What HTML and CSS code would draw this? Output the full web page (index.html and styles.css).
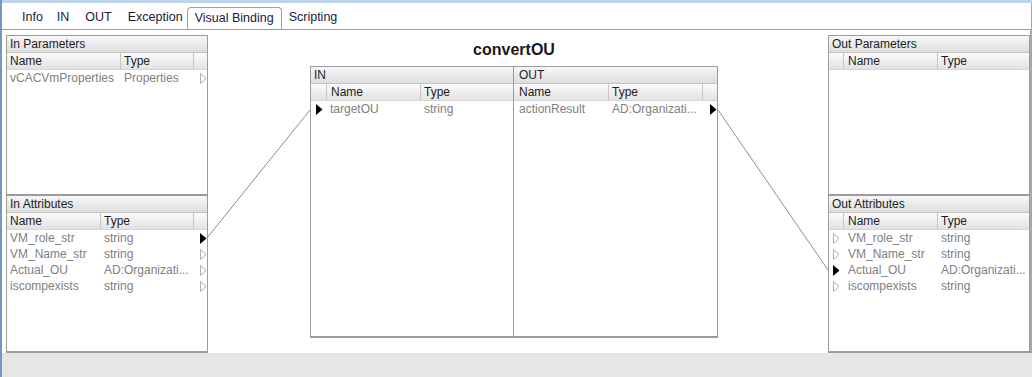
FILE: index.html
```html
<!DOCTYPE html>
<html>
<head>
<meta charset="utf-8">
<link rel="stylesheet" href="styles.css">
</head>
<body>
<div class="window">
  <div class="topbar"></div>
  <div class="tabs">
    <span class="tab">Info</span>
    <span class="tab">IN</span>
    <span class="tab">OUT</span>
    <span class="tab">Exception</span>
    <span class="tab active">Visual Binding</span>
    <span class="tab">Scripting</span>
  </div>
  <div class="content">
    <div class="col side">
      <div class="panel p-top">
        <div class="ptitle">In Parameters</div>
        <div class="grid g-inparam head"><span>Name</span><span>Type</span><span></span></div>
        <div class="grid g-inparam row"><span>vCACVmProperties</span><span>Properties</span><span class="arr"><svg width="7" height="11" viewBox="0 0 7 11"><path d="M0.5 0.5 L6 5.5 L0.5 10.5 Z" fill="none" stroke="#b0b0b0"/></svg></span></div>
      </div>
      <div class="panel p-bot">
        <div class="ptitle">In Attributes</div>
        <div class="grid g-inattr head"><span>Name</span><span>Type</span><span></span></div>
        <div class="grid g-inattr row"><span>VM_role_str</span><span>string</span><span class="arr"><svg width="7" height="11" viewBox="0 0 7 11"><path d="M0 0 L6.5 5.5 L0 11 Z" fill="#000"/></svg></span></div>
        <div class="grid g-inattr row"><span>VM_Name_str</span><span>string</span><span class="arr"><svg width="7" height="11" viewBox="0 0 7 11"><path d="M0.5 0.5 L6 5.5 L0.5 10.5 Z" fill="none" stroke="#b0b0b0"/></svg></span></div>
        <div class="grid g-inattr row"><span>Actual_OU</span><span>AD:Organizati...</span><span class="arr"><svg width="7" height="11" viewBox="0 0 7 11"><path d="M0.5 0.5 L6 5.5 L0.5 10.5 Z" fill="none" stroke="#b0b0b0"/></svg></span></div>
        <div class="grid g-inattr row"><span>iscompexists</span><span>string</span><span class="arr"><svg width="7" height="11" viewBox="0 0 7 11"><path d="M0.5 0.5 L6 5.5 L0.5 10.5 Z" fill="none" stroke="#b0b0b0"/></svg></span></div>
      </div>
    </div>

    <div class="col center">
      <div class="ctitle">convertOU</div>
      <div class="box">
        <div class="sect s-in">
          <div class="ptitle">IN</div>
          <div class="grid g-cin head"><span></span><span>Name</span><span>Type</span></div>
          <div class="grid g-cin row"><span class="arr"><svg width="7" height="11" viewBox="0 0 7 11"><path d="M0 0 L6.5 5.5 L0 11 Z" fill="#000"/></svg></span><span>targetOU</span><span>string</span></div>
        </div>
        <div class="sect s-out">
          <div class="ptitle">OUT</div>
          <div class="grid g-cout head"><span>Name</span><span>Type</span><span></span></div>
          <div class="grid g-cout row"><span>actionResult</span><span>AD:Organizati...</span><span class="arr"><svg width="7" height="11" viewBox="0 0 7 11"><path d="M0 0 L6.5 5.5 L0 11 Z" fill="#000"/></svg></span></div>
        </div>
      </div>
    </div>

    <div class="col side">
      <div class="panel p-top">
        <div class="ptitle">Out Parameters</div>
        <div class="grid g-out head"><span></span><span>Name</span><span>Type</span></div>
      </div>
      <div class="panel p-bot">
        <div class="ptitle">Out Attributes</div>
        <div class="grid g-out head"><span></span><span>Name</span><span>Type</span></div>
        <div class="grid g-out row"><span class="arr"><svg width="7" height="11" viewBox="0 0 7 11"><path d="M0.5 0.5 L6 5.5 L0.5 10.5 Z" fill="none" stroke="#b0b0b0"/></svg></span><span>VM_role_str</span><span>string</span></div>
        <div class="grid g-out row"><span class="arr"><svg width="7" height="11" viewBox="0 0 7 11"><path d="M0.5 0.5 L6 5.5 L0.5 10.5 Z" fill="none" stroke="#b0b0b0"/></svg></span><span>VM_Name_str</span><span>string</span></div>
        <div class="grid g-out row"><span class="arr"><svg width="7" height="11" viewBox="0 0 7 11"><path d="M0 0 L6.5 5.5 L0 11 Z" fill="#000"/></svg></span><span>Actual_OU</span><span>AD:Organizati...</span></div>
        <div class="grid g-out row"><span class="arr"><svg width="7" height="11" viewBox="0 0 7 11"><path d="M0.5 0.5 L6 5.5 L0.5 10.5 Z" fill="none" stroke="#b0b0b0"/></svg></span><span>iscompexists</span><span>string</span></div>
      </div>
    </div>

    <svg class="wires" width="1030" height="323" viewBox="0 0 1030 323">
      <line x1="205" y1="208" x2="308" y2="80" stroke="#8c8c8c" stroke-width="1"/>
      <line x1="716" y1="80" x2="826" y2="240" stroke="#8c8c8c" stroke-width="1"/>
    </svg>
  </div>
  <div class="footer"></div>
</div>
</body>
</html>
```

FILE: styles.css
```css
* { box-sizing: border-box; }
html, body { margin: 0; padding: 0; }
body {
  font-family: "Liberation Sans", Arial, sans-serif;
  font-size: 12px;
  background: #ffffff;
}
.window {
  width: 1032px;
  height: 377px;
  display: flex;
  flex-direction: column;
  border-left: 2px solid #7298c4;
  background: #ffffff;
}
.topbar {
  height: 3px;
  background: #bcd3ec;
  flex: none;
}
.tabs {
  height: 26px;
  flex: none;
  display: flex;
  align-items: flex-end;
  padding-left: 13px;
  border-right: 1px solid #a8a8a8;
}
.tab {
  padding: 0 7px;
  height: 22px;
  line-height: 20px;
  color: #1a1a3a;
  font-size: 12.5px;
}
.tab:nth-child(3), .tab:nth-child(4) { margin-left: 2px; }
.tab.active {
  margin: 0 0 0 -3px;
  padding: 0 7px;
  height: 23px;
  border: 1px solid #a0a0a0;
  border-bottom: none;
  border-radius: 4px 4px 0 0;
  background: #fff;
  position: relative;
  top: 1px;
  line-height: 21px;
}
.content {
  position: relative;
  height: 324px;
  flex: none;
  display: flex;
  padding: 5px 0 0 4px;
  border-top: 1px solid #a0a0a0;
  border-right: 2px solid #a8a8a8;
}
.col.side {
  width: 202px;
  display: flex;
  flex-direction: column;
}
.col.center {
  width: 620px;
  padding-left: 102px;
}
.panel {
  border: 1px solid #9c9c9c;
  background: #fff;
}
.p-top { height: 160px; }
.p-bot { height: 158px; border-bottom-width: 2px; }
.ptitle {
  height: 17px;
  line-height: 16px;
  padding-left: 3px;
  color: #1e1e1e;
  background: linear-gradient(#f7f7f7, #dedede);
  border-bottom: 1px solid #c4c4c4;
}
.grid { display: grid; height: 16px; line-height: 16px; }
.grid > span { padding-left: 3px; white-space: nowrap; overflow: hidden; }
.head {
  background: linear-gradient(#fbfbfb, #e2e2e2);
  color: #1e1e1e;
  height: 17px;
  border-bottom: 1px solid #d6d6d6;
}
.head > span + span { border-left: 1px solid #c6c6c6; }
.row > span + span { padding-left: 4px; }
.row { color: #808080; }
.grid > .arr { display: flex; align-items: center; }
.g-inparam { grid-template-columns: 113px 73px 1fr; }
.g-inattr { grid-template-columns: 93px 93px 1fr; }
.g-inparam > .arr, .g-inattr > .arr { padding-left: 7px; }
.g-out { grid-template-columns: 14px 94px 1fr; }
.g-out > .arr { padding-left: 4px; }
.g-out > span:nth-child(2) { padding-left: 5px; }
.g-out.head > span:nth-child(2) { padding-left: 4px; }
.g-cin { grid-template-columns: 15px 94px 1fr; }
.g-cin > .arr { padding-left: 5px; }
.g-cin > span:nth-child(2) { padding-left: 4px; }
.g-cout { grid-template-columns: 94px 94px 1fr; }
.g-cout > span:first-child { padding-left: 5px; }
.g-cout > .arr { padding-left: 8px; }
.ctitle {
  width: 408px;
  height: 31px;
  text-align: center;
  font-weight: bold;
  font-size: 16px;
  line-height: 30px;
  color: #1a1a1a;
}
.box {
  width: 408px;
  height: 272px;
  border: 1px solid #9c9c9c;
  border-bottom-width: 2px;
  display: flex;
}
.sect { height: 100%; }
.s-in { width: 203px; border-right: 1px solid #9c9c9c; }
.s-out { flex: 1; }
.s-out .ptitle { padding-left: 5px; }
.wires {
  position: absolute;
  left: 0;
  top: 0;
  pointer-events: none;
}
.footer {
  flex: 1;
  background: #e6e6e6;
}
```
